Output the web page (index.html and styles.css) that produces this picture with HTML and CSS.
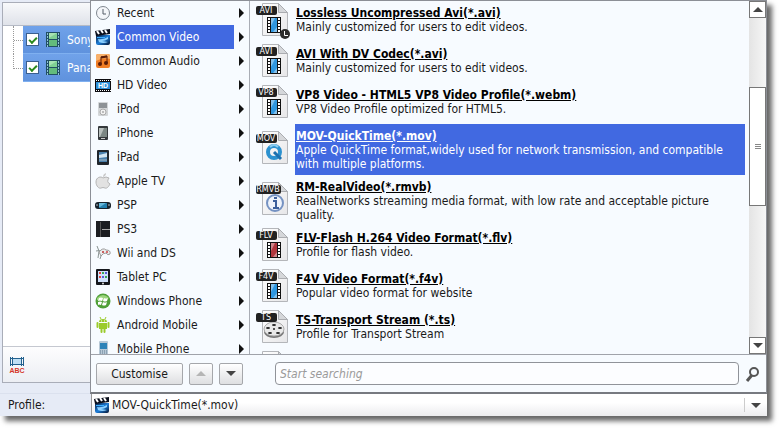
FILE: index.html
```html
<!DOCTYPE html>
<html lang="en">
<head>
  <meta charset="UTF-8" />
  <meta name="viewport" content="width=device-width, initial-scale=1.0"/>
  <title>Video Converter</title>
  <link rel="stylesheet" href="styles.css">
</head>
<body>
  <!-- shared icons -->
  <svg class="defs" aria-hidden="true">
    <defs>
      <linearGradient id="pageGrad" x1="0" y1="0" x2="1" y2="1">
        <stop offset="0" stop-color="#ffffff"/><stop offset="1" stop-color="#e6e6e8"/>
      </linearGradient>
      <linearGradient id="clapGrad" x1="0" y1="0" x2="1" y2="1">
        <stop offset="0" stop-color="#0b1a38"/><stop offset="0.5" stop-color="#1d7fdc"/><stop offset="1" stop-color="#04112c"/>
      </linearGradient>
    </defs>
    <symbol id="page" viewBox="0 0 34 34">
      <path d="M6.500 1.500H22.500L31.500 10.500V33.500H6.500Z" fill="url(#pageGrad)" stroke="#b4b6ba"/>
      <path d="M22.500 1.500V10.500H31.500Z" fill="#d5d7da" stroke="#aaacb0"/>
    </symbol>
    <symbol id="strip" viewBox="0 0 14 16">
      <rect width="14" height="16" fill="#111"/>
      <path d="M2 1V16M12 1V16" stroke="#fff" stroke-width="2" stroke-dasharray="2 1"/>
      <rect x="4" y="1" width="6" height="14" fill="currentColor"/>
      <path d="M4 1H8L4 9ZM10 10V15H6Z" fill="#fff" fill-opacity="0.4"/>
    </symbol>
    <symbol id="clapper" viewBox="0 0 16 16">
      <path d="M1 6H15V14Q15 16 13 16H3Q1 16 1 14Z" fill="url(#clapGrad)"/>
      <path d="M0 2L15 0V5L1 7Z" fill="#0a0f1c"/>
      <path d="M2 2L4 5M6 1L8 4M10 1L12 4" stroke="#fff" stroke-width="2"/>
      <path d="M3 10Q8 11 13 8V10Q10 12 7 12L13 13Q8 15 4 13Z" fill="#8fd2ff"/>
      <path d="M2 8.500H10" stroke="#3db0ff"/>
    </symbol>
    <symbol id="film" viewBox="0 0 14 15">
      <rect width="14" height="15" fill="#214f63"/>
      <path d="M1.500 1V15M12.500 1V15" stroke="#8fc0d8" stroke-dasharray="2 1"/>
      <rect x="3" y="1" width="8" height="6" fill="#7fd093"/>
      <rect x="3" y="8" width="8" height="6" fill="#63bb7c"/>
      <path d="M3 1H11L3 6Z" fill="#a7e3b2"/>
    </symbol>
  </svg>

  <div class="app">
    <div class="workspace">
      <div class="file-panel">
        <div class="file-header"></div>
        <ul class="file-tree">
          <li><label><input type="checkbox" checked><svg class="film-icon"><use href="#film"/></svg>Sony</label></li>
          <li><label><input type="checkbox" checked><svg class="film-icon"><use href="#film"/></svg>Pana</label></li>
        </ul>
        <div class="file-tools">
          <button class="rename-btn" aria-label="Rename">
            <svg width="16" height="16" viewBox="0 0 16 16">
              <path d="M1 1.500H15M1 7.500H15M3.500 0V9M12.500 0V9M1.500 0V9M14.500 0V9" stroke="#23618e" fill="none"/>
              <rect x="4" y="2" width="8" height="5" fill="#bfe0f5"/>
              <text x="8" y="16" class="abc">ABC</text>
            </svg>
          </button>
        </div>
      </div>
    </div>

    <div class="profile-bar">
      <label for="profile">Profile:</label>
      <div class="profile-box">
        <svg class="icon"><use href="#clapper"/></svg>
        <select id="profile"><option>MOV-QuickTime(*.mov)</option></select>
        <span class="drop"><i class="tri down"></i></span>
      </div>
    </div>

    <div class="popup">
      <div class="popup-main">
        <ul class="categories">
          <li><svg class="icon" viewBox="0 0 16 16"><circle cx="8" cy="8" r="6.500" fill="#f4f6f9" stroke="#7f8790"/><path d="M8 4V9H11" stroke="#555c66" fill="none"/></svg><a href="#">Recent</a><i class="tri right"></i></li>
          <li><svg class="icon"><use href="#clapper"/></svg><a href="#" class="active">Common Video</a><i class="tri right"></i></li>
          <li><svg class="icon" viewBox="0 0 16 16"><rect x="1" y="1" width="14" height="14" rx="2" fill="#f07e26"/><path d="M1 3Q1 1 3 1H13Q15 1 15 3V6Q8 4 1 8Z" fill="#f8b06a"/><path d="M6 11V4L12 3V10" fill="none" stroke="#5a1c08"/><path d="M6 4.500L12 3.500" stroke="#5a1c08" stroke-width="2"/><circle cx="5" cy="11" r="2" fill="#5a1c08"/><circle cx="11" cy="10" r="2" fill="#5a1c08"/></svg><a href="#">Common Audio</a><i class="tri right"></i></li>
          <li><svg class="icon" viewBox="0 0 16 16"><rect y="2" width="16" height="13" fill="#0c0c10"/><path d="M1 3.500H16M1 13.500H16" stroke="#fff" stroke-dasharray="1 1"/><rect x="1" y="5" width="14" height="7" fill="#2f8fd8"/><text x="8" y="11" class="hd">HD</text></svg><a href="#">HD Video</a><i class="tri right"></i></li>
          <li><svg class="icon" viewBox="0 0 16 16"><rect x="3" y="1" width="10" height="14" rx="1" fill="#d3d6d8"/><rect x="4" y="2" width="8" height="5" fill="#8d9296"/><circle cx="8" cy="11" r="3" fill="#f2f2f2" stroke="#aaa"/><circle cx="8" cy="11" r="1" fill="#aaa"/></svg><a href="#">iPod</a><i class="tri right"></i></li>
          <li><svg class="icon" viewBox="0 0 16 16"><rect x="3" y="1" width="10" height="14" rx="1" fill="#34383b"/><rect x="4" y="3" width="8" height="9" fill="#7c8784"/><path d="M4 3H9L5 12H4Z" fill="#b9c0be"/><path d="M6 13.500H10" stroke="#ccc"/></svg><a href="#">iPhone</a><i class="tri right"></i></li>
          <li><svg class="icon" viewBox="0 0 16 16"><rect x="2" y="1" width="12" height="15" rx="1" fill="#20262c"/><rect x="4" y="3" width="8" height="10" fill="#4a80ac"/><path d="M4 6L12 4V8L4 9Z" fill="#d3e6f2"/><path d="M4 11H12" stroke="#a7b7c2"/></svg><a href="#">iPad</a><i class="tri right"></i></li>
          <li><svg class="icon" viewBox="0 0 16 16"><path d="M8 5C6 3 1 4 1 9C1 13 4 16 6 15Q8 14 10 15C12 16 14 13 15 11Q11 9 14 5Q11 3 8 5Z" fill="#e2e2e2" stroke="#b5b5b5"/><path d="M8 4Q8 1 11 0Q11 3 8 4Z" fill="#c8c8c8"/></svg><a href="#">Apple TV</a><i class="tri right"></i></li>
          <li><svg class="icon" viewBox="0 0 16 16"><rect y="5" width="16" height="7" rx="3" fill="#18232c"/><rect x="4" y="6" width="8" height="5" fill="#237fae"/><path d="M4 6H11L5 10H4Z" fill="#66b8da"/><circle cx="2" cy="8" r="1" fill="#7f8b93"/><circle cx="14" cy="8" r="1" fill="#7f8b93"/></svg><a href="#">PSP</a><i class="tri right"></i></li>
          <li><svg class="icon" viewBox="0 0 16 16"><rect x="1" y="0" width="14" height="16" fill="#1b1d21"/><path d="M7 8.500H15" stroke="#aaa"/><path d="M5.500 1V16" stroke="#555"/></svg><a href="#">PS3</a><i class="tri right"></i></li>
          <li><svg class="icon" viewBox="0 0 16 16"><path d="M2 1L4 6L3 13M1 6Q5 4 7 8L5 14" fill="none" stroke="#8b9594"/><path d="M4 7Q8 2 11 5Q16 5 15 9Q13 11 11 8Q8 8 6 11Z" fill="#ececec" stroke="#9b9b9b"/><path d="M8 6V8M7 7H9" stroke="#b33"/><circle cx="12" cy="7" r="1" fill="#c44"/></svg><a href="#">Wii and DS</a><i class="tri right"></i></li>
          <li><svg class="icon" viewBox="0 0 16 16"><rect x="1" width="14" height="16" rx="1" fill="#15171c"/><rect x="3" y="2" width="10" height="11" fill="#cfe0fa"/><path d="M4 4H6M4 8H6" stroke="#e0443c" stroke-width="2"/><path d="M7 4H9M10 8H12" stroke="#36a853" stroke-width="2"/><path d="M10 4H12M7 8H9" stroke="#5a5ad8" stroke-width="2"/><circle cx="8" cy="14.500" r="1" fill="#ddd"/></svg><a href="#">Tablet PC</a><i class="tri right"></i></li>
          <li><svg class="icon" viewBox="0 0 16 16"><circle cx="8" cy="8" r="7.500" fill="#4f9f38"/><path d="M2 5Q8 -1 14 5Q9 9 2 7Z" fill="#9bd47c"/><path d="M4 5Q6 4 8 5L7 8Q5 7 3 8ZM9 5Q11 6 13 5L12 8Q10 9 8 8ZM3 9Q5 8 7 9L6 12Q4 11 3 12ZM8 9Q10 10 12 9L11 12Q9 13 7 12Z" fill="#fff"/></svg><a href="#">Windows Phone</a><i class="tri right"></i></li>
          <li><svg class="icon" viewBox="0 0 16 16"><path d="M4 5Q4 2 8 2Q12 2 12 5ZM4 6H12V12H4Z" fill="#9bcb2c"/><path d="M2.500 6V10M13.500 6V10M6.500 12V15M9.500 12V15" stroke="#9bcb2c" stroke-width="2" stroke-linecap="round"/><path d="M5 0L6 2M11 0L10 2" stroke="#9bcb2c"/><path d="M6 4H7M9 4H10" stroke="#fff"/></svg><a href="#">Android Mobile</a><i class="tri right"></i></li>
          <li><svg class="icon" viewBox="0 0 16 16"><rect x="4" y="0" width="9" height="16" rx="1" fill="#b7c8d6"/><rect x="5" y="2" width="7" height="6" fill="#2e83b8"/><path d="M5 10H12M5 12H12M5 14H12" stroke="#637c90" stroke-dasharray="1 1"/></svg><a href="#">Mobile Phone</a><i class="tri right"></i></li>
        </ul>

        <ul class="formats">
          <li>
            <svg class="format-icon" viewBox="0 0 34 34"><use href="#page" width="34" height="34"/><use href="#strip" x="11" y="15" width="14" height="16" color="#2f97e0"/><rect width="21" height="9" y="4" rx="2" class="tag"/><text x="10" y="11" class="tag-text">AVI</text><circle cx="29" cy="32" r="5" fill="#2c2c2c"/><path d="M28.500 29V33.500H32" stroke="#fff" fill="none"/></svg>
            <a href="#"><b>Lossless Uncompressed Avi(*.avi)</b><span>Mainly customized for users to edit videos.</span></a>
          </li>
          <li>
            <svg class="format-icon" viewBox="0 0 34 34"><use href="#page" width="34" height="34"/><use href="#strip" x="11" y="15" width="14" height="16" color="#2f97e0"/><rect width="21" height="9" y="4" rx="2" class="tag"/><text x="10" y="11" class="tag-text">AVI</text></svg>
            <a href="#"><b>AVI With DV Codec(*.avi)</b><span>Mainly customized for users to edit videos.</span></a>
          </li>
          <li>
            <svg class="format-icon" viewBox="0 0 34 34"><use href="#page" width="34" height="34"/><use href="#strip" x="11" y="15" width="14" height="16" color="#2f97e0"/><rect width="21" height="9" y="4" rx="2" class="tag"/><text x="10" y="11" class="tag-text">VP8</text></svg>
            <a href="#"><b>VP8 Video - HTML5 VP8 Video Profile(*.webm)</b><span>VP8 Video Profile optimized for HTML5.</span></a>
          </li>
          <li class="selected">
            <svg class="format-icon" viewBox="0 0 34 34"><use href="#page" width="34" height="34"/><circle cx="18" cy="22" r="6" fill="none" stroke="#2c91cf" stroke-width="4"/><path d="M14 17Q18 13 22 17" stroke="#8ccdf0" stroke-width="2" fill="none"/><path d="M18 22L25 29" stroke="#1c6fae" stroke-width="3"/><rect width="21" height="9" y="4" rx="2" class="tag"/><text x="10" y="11" class="tag-text">MOV</text></svg>
            <a href="#"><b>MOV-QuickTime(*.mov)</b><span>Apple QuickTime format,widely used for network transmission, and compatible with multiple platforms.</span></a>
          </li>
          <li>
            <svg class="format-icon" viewBox="0 0 34 34"><use href="#page" width="34" height="34"/><circle cx="19" cy="22" r="8" fill="#eef3fb" stroke="#7592c2" stroke-width="2"/><path d="M18 17H21M17 20H20V27M17 27H23" stroke="#3c5f9c" stroke-width="2" fill="none"/><rect width="25" height="9" y="4" rx="2" class="tag"/><text x="12" y="11" class="tag-text">RMVB</text></svg>
            <a href="#"><b>RM-RealVideo(*.rmvb)</b><span>RealNetworks streaming media format, with low rate and acceptable picture quality.</span></a>
          </li>
          <li>
            <svg class="format-icon" viewBox="0 0 34 34"><use href="#page" width="34" height="34"/><use href="#strip" x="11" y="15" width="14" height="16" color="#b0363d"/><rect width="21" height="9" y="4" rx="2" class="tag"/><text x="10" y="11" class="tag-text">FLV</text></svg>
            <a href="#"><b>FLV-Flash H.264 Video Format(*.flv)</b><span>Profile for flash video.</span></a>
          </li>
          <li>
            <svg class="format-icon" viewBox="0 0 34 34"><use href="#page" width="34" height="34"/><use href="#strip" x="11" y="15" width="14" height="16" color="#2f97e0"/><rect width="21" height="9" y="4" rx="2" class="tag"/><text x="10" y="11" class="tag-text">F4V</text></svg>
            <a href="#"><b>F4V Video Format(*.f4v)</b><span>Popular video format for website</span></a>
          </li>
          <li>
            <svg class="format-icon" viewBox="0 0 34 34"><use href="#page" width="34" height="34"/><ellipse cx="18" cy="23" rx="10" ry="6" fill="#777"/><ellipse cx="18" cy="20" rx="10" ry="7" fill="#e9e9e9" stroke="#aaa"/><g fill="#222"><ellipse cx="18" cy="16" rx="2" ry="1"/><ellipse cx="12" cy="19" rx="2" ry="1"/><ellipse cx="24" cy="19" rx="2" ry="1"/><ellipse cx="14" cy="24" rx="2" ry="1"/><ellipse cx="22" cy="24" rx="2" ry="1"/><circle cx="18" cy="20" r="1"/></g><rect width="21" height="9" y="4" rx="2" class="tag"/><text x="10" y="11" class="tag-text">TS</text></svg>
            <a href="#"><b>TS-Transport Stream (*.ts)</b><span>Profile for Transport Stream</span></a>
          </li>
          <li>
            <svg class="format-icon" viewBox="0 0 34 34"><use href="#page" width="34" height="34"/></svg>
          </li>
        </ul>

        <div class="scrollbar">
          <button aria-label="Scroll up"><i class="tri up"></i></button>
          <div class="track"><div class="thumb"><i></i></div></div>
          <button aria-label="Scroll down"><i class="tri down"></i></button>
        </div>
      </div>

      <div class="popup-footer">
        <button class="btn customise">Customise</button>
        <button class="btn move" aria-label="Move up" disabled><i class="tri up"></i></button>
        <button class="btn move" aria-label="Move down"><i class="tri down"></i></button>
        <input type="text" class="search" placeholder="Start searching" aria-label="Search profiles">
        <button class="search-btn" aria-label="Search">
          <svg width="16" height="18" viewBox="0 0 16 18"><circle cx="9" cy="7" r="4" fill="none" stroke="#555" stroke-width="2"/><path d="M7 10L2 16" stroke="#555" stroke-width="3"/></svg>
        </button>
      </div>
    </div>
  </div>
</body>
</html>
```
FILE: styles.css
```css
* {
  box-sizing: border-box;
}

body {
  margin: 0;
  height: 100vh;
  padding: 0 15px 15px 0;
  background: #fff;
  font-family: "DejaVu Sans Condensed", "Noto Sans", sans-serif;
  font-size: 12px;
  line-height: 14px;
  color: #1a1a1a;
  overflow: hidden;
}

ul {
  list-style: none;
  margin: 0;
  padding: 0;
}

a {
  color: inherit;
  text-decoration: none;
}

button,
input,
select {
  font: inherit;
  color: inherit;
}

.defs {
  position: absolute;
  width: 0;
  height: 0;
}

.app {
  position: relative;
  height: 100%;
  display: flex;
  flex-direction: column;
  background: #e6ebf6;
  box-shadow: 5px 5px 5px rgba(0, 0, 0, 0.6);
}

/* triangles */
.tri {
  width: 0;
  height: 0;
  flex: none;
  border: 5px solid transparent;
}

.tri.right {
  border-left-color: #111;
  border-right-width: 0;
}

.tri.up {
  border-bottom-color: #444;
  border-top-width: 0;
}

.tri.down {
  border-top-color: #444;
  border-bottom-width: 0;
}

.icon {
  width: 16px;
  height: 16px;
  flex: none;
}

/* left file list */
.workspace {
  flex: 1;
  display: flex;
  min-height: 0;
  padding: 2px 2px 10px;
  border-bottom: 1px solid #dbe1ee;
}

.file-panel {
  flex: 1;
  display: flex;
  flex-direction: column;
  background: #fff;
  border: 1px solid #a9adb8;
}

.file-header {
  height: 23px;
  background: linear-gradient(#f8f9fb, #dfe2e9);
  border-bottom: 1px solid #b5bac5;
}

.file-tree {
  flex: 1;
  padding-left: 10px;
}

.file-tree li {
  display: flex;
  align-items: center;
  height: 28px;
}

.file-tree li:not(:last-child) {
  border-left: 1px dotted #999;
}

.file-tree li::before {
  content: "";
  width: 9px;
  border-top: 1px dotted #999;
}

.file-tree li:last-child::before {
  align-self: flex-start;
  height: 14px;
  border-top: 0;
  border-left: 1px dotted #999;
  border-bottom: 1px dotted #999;
}

.file-tree label {
  flex: 1;
  display: flex;
  align-items: center;
  gap: 7px;
  height: 28px;
  padding-left: 3px;
  color: #fff;
  background: linear-gradient(#70a2ea, #5f92dd);
  border-bottom: 1px solid #7fb0f0;
}

.file-tree input {
  appearance: none;
  width: 13px;
  height: 13px;
  margin: 0;
  background: #fff;
  border: 1px solid #3b5f8e;
  display: grid;
  place-items: center;
}

.file-tree input:checked::before {
  content: "";
  width: 6px;
  height: 3px;
  border-left: 2px solid #2a8a1c;
  border-bottom: 2px solid #2a8a1c;
  transform: rotate(-45deg);
}

.film-icon {
  width: 14px;
  height: 15px;
}

.file-tools {
  height: 36px;
  padding: 8px 4px;
  background: linear-gradient(#fdfdfe, #eceef3);
  border-top: 1px solid #c5c8d0;
}

.rename-btn {
  display: flex;
  padding: 2px;
  border: 0;
  background: none;
}

.abc,
.hd {
  font: bold 7px "Liberation Sans", sans-serif;
  text-anchor: middle;
}

.abc {
  fill: #d5382a;
}

.hd {
  fill: #fff;
}

/* profile row */
.profile-bar {
  display: flex;
  align-items: center;
  height: 22px;
  padding-left: 8px;
}

.profile-bar label {
  width: 83px;
}

.profile-box {
  flex: 1;
  display: flex;
  align-items: center;
  height: 100%;
  padding-left: 2px;
  background: linear-gradient(#fff 40%, #ececee);
  border-left: 1px solid #999;
}

.profile-box select {
  flex: 1;
  appearance: none;
  border: 0;
  padding: 0 2px;
  background: none;
}

.drop {
  display: flex;
  align-items: center;
  justify-content: center;
  width: 23px;
  height: 14px;
  border-left: 1px solid #ccc;
}

/* popup menu */
.popup {
  position: absolute;
  inset: 0 0 22px 90px;
  display: flex;
  flex-direction: column;
  background: #f7fbff;
  border: 1px solid #8c8f96;
  border-bottom: 2px solid #777a80;
}

.popup-main {
  flex: 1;
  display: flex;
  min-height: 0;
}

.categories {
  width: 159px;
  overflow: hidden;
  border-right: 1px solid #a9adb5;
}

.categories li {
  display: flex;
  align-items: center;
  gap: 5px;
  height: 24px;
  padding: 0 5px 0 4px;
}

.categories a {
  flex: 1;
  padding-left: 1px;
  line-height: 24px;
}

.categories .active {
  background: #4169e1;
  color: #fff;
}

.formats {
  flex: 1;
  min-width: 0;
  overflow: hidden;
  padding: 0 4px 0 6px;
}

.formats li {
  display: flex;
  align-items: center;
  gap: 5px;
  min-height: 41px;
}

.formats a {
  flex: 1;
  align-self: stretch;
  padding: 5px 8px 4px 1px;
}

.formats b,
.formats span {
  display: block;
}

.formats b {
  text-decoration: underline;
  color: #000;
}

.formats .selected a,
.formats .selected b {
  background: #4169e1;
  color: #fff;
}

.format-icon {
  width: 34px;
  height: 34px;
  flex: none;
  margin-bottom: 5px;
  overflow: visible;
}

.tag {
  fill: #222;
}

.tag-text {
  font: 8px "DejaVu Sans", sans-serif;
  fill: #fff;
  text-anchor: middle;
}

.scrollbar {
  display: flex;
  flex-direction: column;
  width: 17px;
  background: linear-gradient(90deg, #e4e4e4, #f6f6f6);
}

.scrollbar button {
  display: flex;
  align-items: center;
  justify-content: center;
  height: 17px;
  padding: 0;
  background: #fff;
  border: 1px solid #777;
}

.track {
  flex: 1;
  padding-top: 69px;
}

.thumb {
  display: flex;
  align-items: center;
  justify-content: center;
  height: 37%;
  min-height: 119px;
  background: #fff;
  border: 1px solid #777;
}

.thumb i {
  width: 6px;
  height: 5px;
  background: repeating-linear-gradient(#888 0 1px, transparent 1px 2px);
}

.popup-footer {
  display: flex;
  align-items: center;
  gap: 6px;
  height: 38px;
  padding: 0 5px;
  border-top: 1px solid #a0a3aa;
}

.btn {
  display: flex;
  align-items: center;
  justify-content: center;
  height: 22px;
  padding: 0;
  background: linear-gradient(#fff, #dedfe1);
  border: 1px solid #a5a7ab;
  border-radius: 2px;
}

.customise {
  width: 87px;
}

.move {
  width: 24px;
}

.move:disabled .tri {
  border-bottom-color: #b5b5b5;
}

.search {
  flex: 1;
  min-width: 0;
  height: 23px;
  margin-left: 26px;
  padding: 0 4px;
  background: #fcfdff;
  border: 1px solid #909399;
  border-radius: 4px;
}

.search::placeholder {
  color: #9a9a9a;
  font-style: italic;
}

.search-btn {
  display: flex;
  padding: 0;
  background: none;
  border: 0;
}
```
